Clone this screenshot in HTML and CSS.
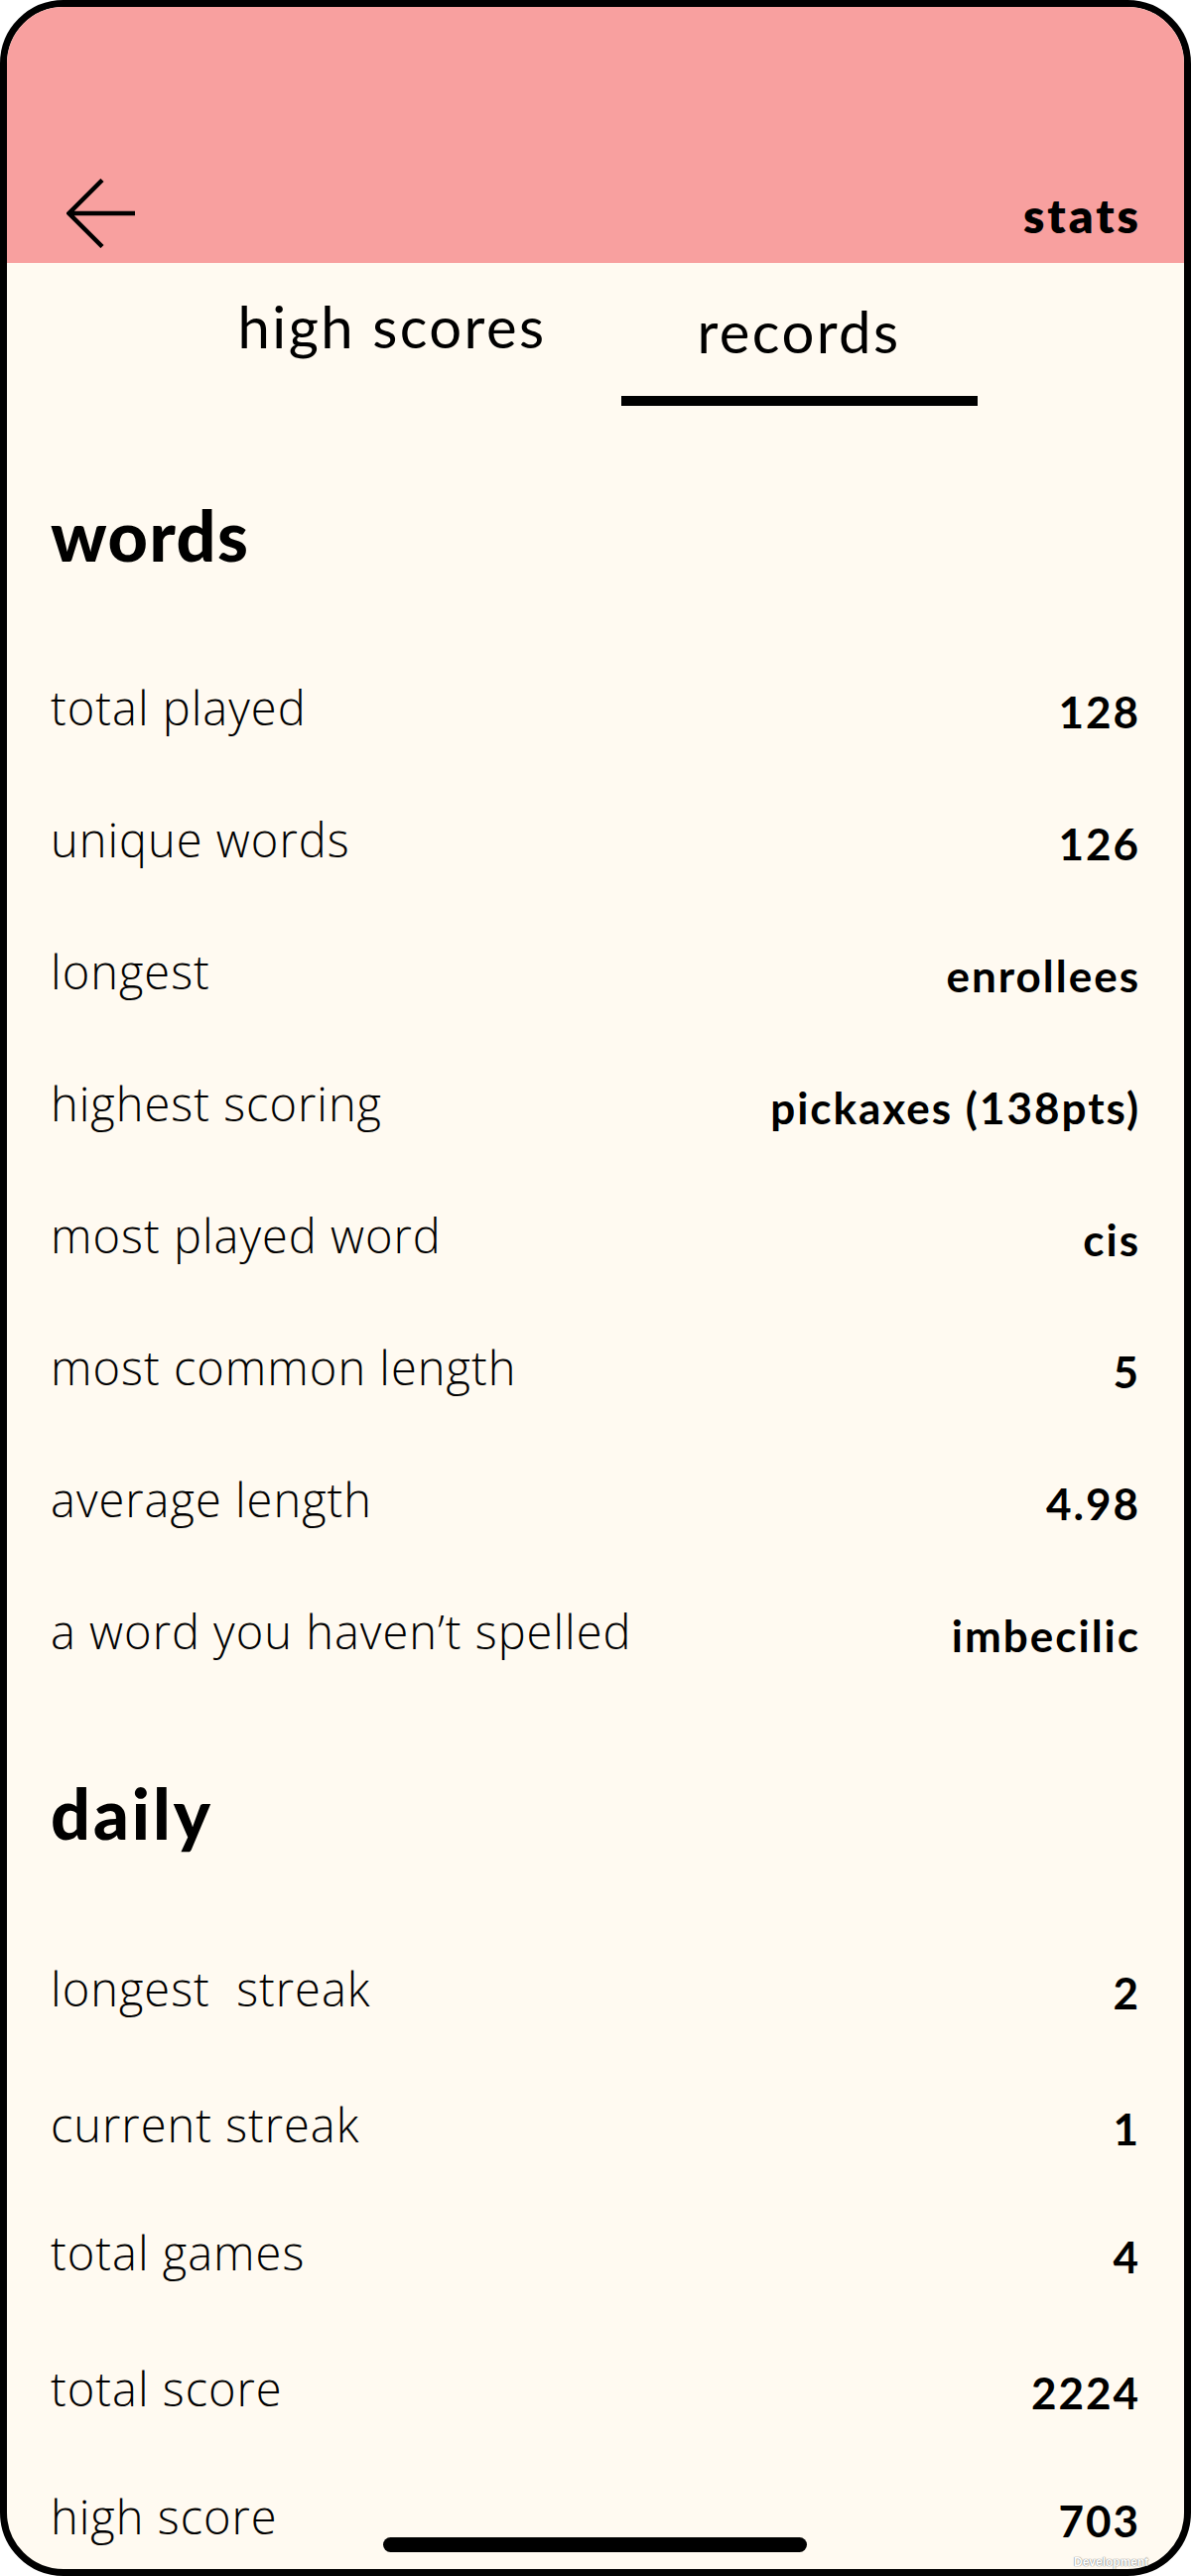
FILE: index.html
```html
<!DOCTYPE html>
<html lang="en">
<head>
<meta charset="utf-8">
<title>stats</title>
<link rel="stylesheet" href="styles.css">
</head>
<body>
<div class="phone">
  <header class="appbar">
    <svg class="back" width="70" height="70" viewBox="0 0 70 70" aria-label="back">
      <path d="M36 1.5 L2.5 35 L36 68.5 M2.5 35 H69" fill="none" stroke="#000" stroke-width="4.5" stroke-linecap="butt" stroke-linejoin="miter"/>
    </svg>
    <div class="title">stats</div>
  </header>

  <nav class="tabs">
    <div class="tab">high scores</div>
    <div class="tab active">records</div>
  </nav>

  <main class="content">
    <section class="section">
      <h2 class="heading">words</h2>
      <div class="row"><span class="label">total played</span><span class="value">128</span></div>
      <div class="row"><span class="label">unique words</span><span class="value">126</span></div>
      <div class="row"><span class="label">longest</span><span class="value">enrollees</span></div>
      <div class="row"><span class="label">highest scoring</span><span class="value">pickaxes (138pts)</span></div>
      <div class="row"><span class="label">most played word</span><span class="value">cis</span></div>
      <div class="row"><span class="label">most common length</span><span class="value">5</span></div>
      <div class="row"><span class="label">average length</span><span class="value">4.98</span></div>
      <div class="row"><span class="label">a word you haven’t spelled</span><span class="value">imbecilic</span></div>
    </section>

    <section class="section daily">
      <h2 class="heading">daily</h2>
      <div class="row tall"><span class="label">longest&nbsp; streak</span><span class="value">2</span></div>
      <div class="row short"><span class="label">current streak</span><span class="value">1</span></div>
      <div class="row tall"><span class="label">total games</span><span class="value">4</span></div>
      <div class="row short"><span class="label">total score</span><span class="value">2224</span></div>
      <div class="row"><span class="label">high score</span><span class="value">703</span></div>
    </section>
  </main>

  <div class="home-indicator"></div>
  <div class="dev-tag">Development</div>
</div>
</body>
</html>
```

FILE: styles.css
```css
* { box-sizing: border-box; }

html, body {
  margin: 0;
  padding: 0;
  background: #ffffff;
}

.phone {
  position: relative;
  width: 1200px;
  height: 2596px;
  border: 7px solid #000;
  border-radius: 64px;
  overflow: hidden;
  background: #FFFAF1;
  color: #000;
}

.appbar {
  height: 258px;
  background: #F8A09F;
  display: flex;
  align-items: flex-end;
  justify-content: space-between;
  padding: 0 46px 15px 60px;
}

.back { display: block; }

.title {
  font-family: Lato, "Liberation Sans", sans-serif;
  font-weight: 800;
  font-size: 48px;
  letter-spacing: 3px;
  line-height: 1.2;
  margin-bottom: 4px;
  margin-right: -3px;
}

.tabs {
  display: flex;
  justify-content: center;
  gap: 51px;
}

.tab {
  width: 359px;
  height: 144px;
  padding-top: 29px;
  text-align: center;
  font-family: Lato, "Liberation Sans", sans-serif;
  font-weight: 400;
  font-size: 58px;
  letter-spacing: 2.4px;
  line-height: 1.2;
}

.tab.active {
  padding-top: 34px;
  border-bottom: 10px solid #000;
}

.content {
  padding: 0 46px 0 44px;
}

.heading {
  margin: 88px 0 66px 0;
  font-family: Lato, "Liberation Sans", sans-serif;
  font-weight: 900;
  font-size: 70px;
  letter-spacing: 1.5px;
  line-height: 1.2;
}

.daily .heading {
  margin-top: 74px;
  margin-bottom: 69px;
  letter-spacing: 3px;
}

.row {
  display: flex;
  justify-content: space-between;
  align-items: baseline;
  height: 133px;
  line-height: 133px;
}

.row.tall { height: 137px; }
.row.short { height: 129px; }

.label {
  font-family: "Open Sans", "Liberation Sans", sans-serif;
  font-weight: 300;
  font-size: 47px;
  letter-spacing: 1px;
  white-space: nowrap;
}

.value {
  font-family: Lato, "Liberation Sans", sans-serif;
  font-weight: 700;
  font-size: 44px;
  letter-spacing: 2px;
  margin-right: -2px;
  white-space: nowrap;
  position: relative;
  top: 3px;
}

.home-indicator {
  position: absolute;
  left: 379px;
  top: 2550px;
  width: 427px;
  height: 15px;
  border-radius: 8px;
  background: #000;
}

.dev-tag {
  position: absolute;
  left: 1075px;
  top: 2568px;
  font-family: "Liberation Sans", sans-serif;
  font-size: 12px;
  font-weight: 700;
  color: #fff;
  text-shadow: 0 0 1px #777, 0 0 1px #777;
  white-space: nowrap;
}
```
